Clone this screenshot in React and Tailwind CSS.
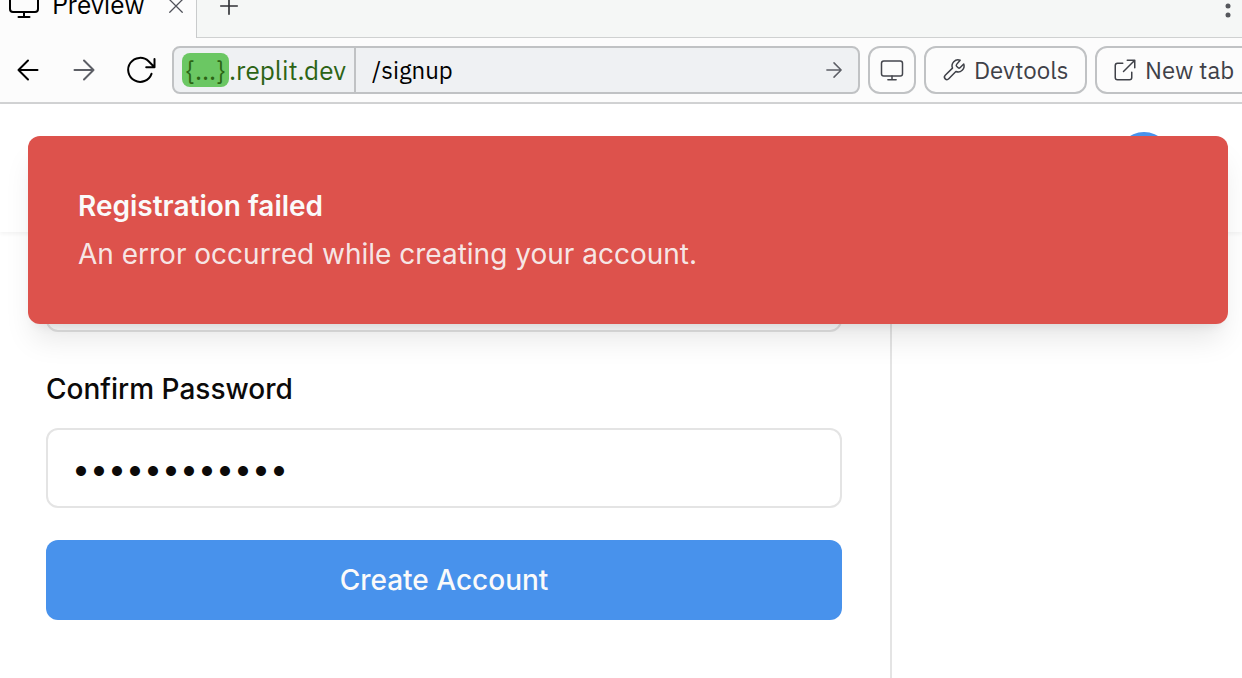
import React from "react";

function Icon({ className, strokeWidth = 2, children }) {
  return (
    <svg
      className={className}
      viewBox="0 0 32 32"
      fill="none"
      stroke="currentColor"
      strokeWidth={strokeWidth}
      strokeLinecap="round"
      strokeLinejoin="round"
      aria-hidden="true"
    >
      {children}
    </svg>
  );
}

function Monitor({ className, strokeWidth }) {
  return (
    <Icon className={className} strokeWidth={strokeWidth}>
      <rect x="2" y="4" width="28" height="20" rx="3" />
      <path d="M16 24v5M10.500 29h11" />
    </Icon>
  );
}

function ArrowRight({ className, strokeWidth }) {
  return (
    <Icon className={className} strokeWidth={strokeWidth}>
      <path d="M6.500 16h19M16 6.500l9.500 9.500-9.500 9.500" />
    </Icon>
  );
}

function TabStrip() {
  return (
    <header className="flex h-[38px] overflow-hidden bg-[#f5f7f6]">
      <div className="flex w-[197px] shrink-0 items-start border-r border-[#c9cbcc] bg-[#fcfcfc] pl-2">
        <Monitor className="-mt-3 size-8 text-black" />
        <span className="-mt-3 ml-3 w-24 text-[26px] leading-8 text-black">Preview</span>
        <button type="button" aria-label="Close tab" className="-mt-1 ml-[18px] text-[#50525a]">
          <Icon className="size-5" strokeWidth={2}>
            <path d="M6 6l20 20M26 6L6 26" />
          </Icon>
        </button>
      </div>
      <div className="flex flex-1 items-start justify-between border-b border-[#cfd1d1] pl-5">
        <button type="button" aria-label="New tab" className="-mt-1.5 text-[#303236]">
          <Icon className="size-6" strokeWidth={2.2}>
            <path d="M16 5v22M5 16h22" />
          </Icon>
        </button>
        <button type="button" aria-label="More options" className="-mt-2 mr-0.5 text-[#55575c]">
          <svg viewBox="0 0 24 32" className="h-8 w-6" fill="currentColor" aria-hidden="true">
            <circle cx="12" cy="5" r="2.500" />
            <circle cx="12" cy="14" r="2.500" />
            <circle cx="12" cy="23" r="2.500" />
          </svg>
        </button>
      </div>
    </header>
  );
}

function Toolbar() {
  return (
    <nav aria-label="Browser controls" className="flex h-[66px] items-center gap-2 overflow-hidden border-b-2 border-[#d1d2d3] bg-[#fcfcfc] pl-3">
      <div className="flex w-[152px] shrink-0 items-center gap-6">
        <button type="button" aria-label="Back" className="text-black">
          <Icon className="size-8">
            <path d="M25.500 16h-19M16 6.500L6.500 16l9.500 9.500" />
          </Icon>
        </button>
        <button type="button" aria-label="Forward" className="text-[#5c5e65]">
          <ArrowRight className="size-8" />
        </button>
        <button type="button" aria-label="Reload" className="text-black">
          <Icon className="size-8">
            <path d="M27.500 19.800A12 12 0 1 1 24.600 7.300L30.500 13.200M30.500 5v8.200h-8.300" />
          </Icon>
        </button>
      </div>
      <div className="flex h-12 min-w-0 flex-1 items-stretch overflow-hidden rounded-lg border-2 border-[#c0c2c4] bg-[#eff1f3]">
        <div className="flex w-[182px] shrink-0 items-center border-r-2 border-[#c0c2c4] pl-2 text-[26px] text-[#2c6415]">
          <span className="flex h-[34px] w-[47px] items-center justify-center rounded-lg bg-[#6bc763]">{"{...}"}</span>
          <span>.replit.dev</span>
        </div>
        <input
          aria-label="Path"
          defaultValue="/signup"
          className="min-w-0 flex-1 bg-transparent px-4 text-2xl text-black outline-none"
        />
        <button type="button" aria-label="Go" className="px-3 text-[#5c5e65]">
          <ArrowRight className="size-6" />
        </button>
      </div>
      <button type="button" aria-label="Device size" className="flex size-12 shrink-0 items-center justify-center rounded-xl border-2 border-[#c0c2c4] text-[#44464d]">
        <Monitor className="size-6" />
      </button>
      <button type="button" className="flex h-12 w-[163px] shrink-0 items-center gap-2 rounded-xl border-2 border-[#c0c2c4] pl-4 text-2xl text-[#3f4148]">
        <Icon className="size-6" strokeWidth={2}>
          <path d="M19.500 8.500a2 2 0 0 0 0 2.500l2 2a2 2 0 0 0 2.500 0l5-5a8 8 0 0 1-10.500 10L9 27.800a3.300 3.300 0 0 1-4.700-4.700L14 13.500A8 8 0 0 1 24.200 3z" />
        </Icon>
        Devtools
      </button>
      <button type="button" className="-mr-4 flex h-12 w-[163px] shrink-0 items-center gap-2 rounded-xl border-2 border-[#c0c2c4] pl-4 text-2xl whitespace-nowrap text-[#3f4148]">
        <Icon className="size-6" strokeWidth={2}>
          <path d="M13 7H6a3 3 0 0 0-3 3v16a3 3 0 0 0 3 3h16a3 3 0 0 0 3-3v-7M19 3h10v10M29 3L14 18" />
        </Icon>
        New tab
      </button>
    </nav>
  );
}

function Toast() {
  return (
    <div
      role="alert"
      className="absolute top-8 right-3.5 left-7 rounded-xl bg-[#dd524c] px-[50px] py-12 shadow-[0_20px_30px_-6px_rgba(0,0,0,0.1),0_8px_12px_-8px_rgba(0,0,0,0.1)]"
    >
      <p className="text-[28px] leading-[44px] font-semibold text-[#fafafa]">Registration failed</p>
      <p className="mt-1 text-[28px] leading-[44px] text-[#fafafa]/90">An error occurred while creating your account.</p>
    </div>
  );
}

export default function App() {
  return (
    <div className="flex min-h-screen flex-col overflow-x-hidden bg-white font-['IBM_Plex_Sans','Roboto',sans-serif]">
      <TabStrip />
      <Toolbar />
      <div className="relative flex flex-1 flex-col font-['Inter',sans-serif] text-[#0c0a09] [font-optical-sizing:none]">
        <div className="flex h-[128px] items-start justify-end pt-7 pr-[70px] shadow-[0_2px_4px_rgba(0,0,0,0.05)]">
          <span className="size-14 rounded-full bg-[#4892ec]" />
        </div>
        <main className="flex flex-1">
          <form className="flex flex-1 flex-col border-r-2 border-[#e4e4e4] pr-12 pb-10 pl-[46px]" onSubmit={(event) => event.preventDefault()}>
            <input
              type="password"
              aria-label="Password"
              className="mt-5 h-20 rounded-xl border-2 border-[#e4e4e4] px-7 text-[28px] outline-none"
            />
            <label htmlFor="confirm-password" className="mt-9 text-[28px] leading-[42px] font-medium">
              Confirm Password
            </label>
            <input
              id="confirm-password"
              type="password"
              defaultValue="abcdefghijkl"
              className="mt-[18px] h-20 rounded-xl border-2 border-[#e4e4e4] px-6 text-[32px] outline-none"
            />
            <button type="submit" className="mt-8 h-20 rounded-xl bg-[#4892ec] text-[28px] font-medium text-[#fafafa]">
              Create Account
            </button>
          </form>
          <aside className="w-[350px] shrink-0" />
        </main>
        <Toast />
      </div>
    </div>
  );
}
